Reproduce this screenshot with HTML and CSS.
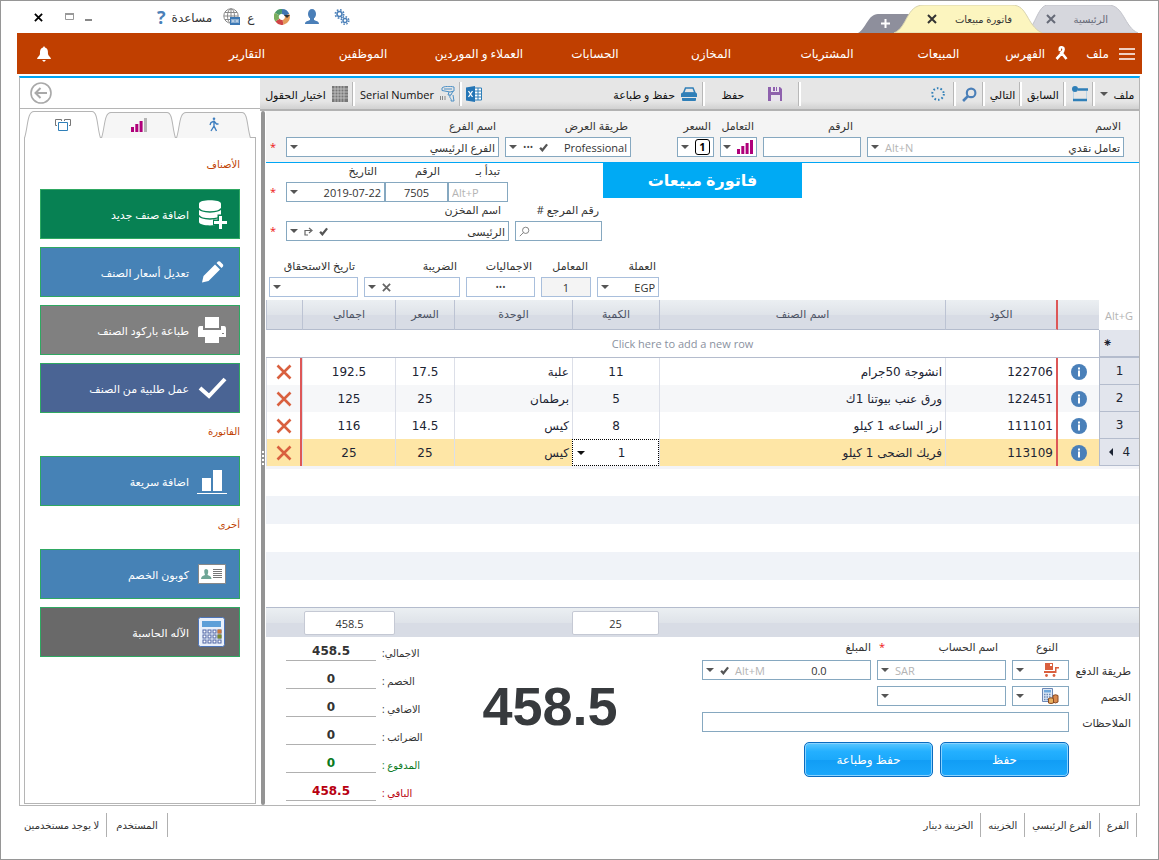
FILE: index.html
```
<!DOCTYPE html>
<html lang="ar" dir="rtl">
<head>
    <meta charset="UTF-8">
    <meta name="viewport" content="width=device-width, initial-scale=1.0">
    <title>فاتورة مبيعات</title>
    <link rel="stylesheet" href="styles.css">
</head>
<body>

    <!-- Shared icons -->
    <svg class="defs" aria-hidden="true">
        <symbol id="i-check" viewBox="0 0 8 8"><path d="M1 4.2 3 6.5 7.2 1.2" fill="none" stroke="#555" stroke-width="2"/></symbol>
        <symbol id="i-x" viewBox="0 0 16 16"><path d="M1.5 1.5 14.5 14.5M14.5 1.5 1.5 14.5" fill="none" stroke="#d9603f" stroke-width="2.6"/></symbol>
        <symbol id="i-close" viewBox="0 0 10 10"><path d="M1 1 9 9M9 1 1 9" fill="none" stroke="currentColor" stroke-width="2"/></symbol>
        <symbol id="i-info" viewBox="0 0 16 16"><circle cx="8" cy="8" r="8" fill="#4a80b9"/><path d="M7 3.500h2v2H7zM7 6.500h2v6H7z" fill="#fff"/></symbol>
        <symbol id="i-bars" viewBox="0 0 16 14"><path d="M0 9h3v5H0zM4.300 6h3v8h-3zM8.600 3h3v11h-3z" fill="#b0007a"/><path d="M13 0h3v14h-3z" fill="var(--last-bar, #b0007a)"/></symbol>
        <symbol id="i-search" viewBox="0 0 14 14"><circle cx="8.500" cy="5.500" r="4" fill="none" stroke="currentColor" stroke-width="var(--ring, 2)"/><path d="M5.500 8.500 1 13" fill="none" stroke="currentColor" stroke-width="var(--ring, 2.500)"/></symbol>
    </svg>

    <!-- Title bar -->
    <header class="titlebar">
        <div class="tabs">
            <div class="tab tab-home">
                <svg class="tab-shape" viewBox="0 0 112 28" preserveAspectRatio="none"><path d="M0 28C10 20 12 0 22 0H82C98 0 98 22 112 28Z" fill="#d6d7dd" stroke="#c2c3ca"/></svg>
                <a href="#">الرئيسية</a>
                <button aria-label="إغلاق"><svg width="10" height="10"><use href="#i-close"/></svg></button>
            </div>
            <div class="tab tab-active">
                <svg class="tab-shape" viewBox="0 0 148 28" preserveAspectRatio="none"><path d="M0 28C14 22 12 0 30 0H118C134 0 132 20 148 28Z" fill="#fcf5bf" stroke="#d8d3ae"/></svg>
                <a href="#">فاتورة مبيعات</a>
                <button aria-label="إغلاق"><svg width="10" height="10"><use href="#i-close"/></svg></button>
            </div>
            <div class="tab tab-new">
                <svg class="tab-shape" viewBox="0 0 60 19" preserveAspectRatio="none"><path d="M0 19C8 15 10 0 20 0H60V19Z" fill="#8e8f9c"/></svg>
                <button aria-label="تبويب جديد"><svg width="9" height="9" viewBox="0 0 9 9"><path d="M4.500 0V9M0 4.500H9" stroke="#fff" stroke-width="2"/></svg></button>
            </div>
        </div>
        <div class="tools">
            <button aria-label="الإعدادات"><svg width="16" height="16" viewBox="0 0 16 16" fill="none" stroke="#4a7fb8"><circle cx="5.500" cy="5" r="2.500" stroke-width="1.500"/><circle cx="5.500" cy="5" r="4.200" stroke-width="1.600" stroke-dasharray="1.700 1.600"/><circle cx="11" cy="11.500" r="2" stroke-width="1.500"/><circle cx="11" cy="11.500" r="3.800" stroke-width="1.500" stroke-dasharray="1.500 1.500"/></svg></button>
            <button aria-label="الحساب"><svg width="16" height="16" viewBox="0 0 16 16" fill="#4a7fb8"><ellipse cx="8" cy="5" rx="4" ry="5"/><path d="M1 15c0-3 3-3 5-4V8h4v3c2 1 5 1 5 4z"/></svg></button>
            <button aria-label="الألوان"><svg width="16" height="16" viewBox="0 0 16 16" fill="none" stroke-width="5"><path d="M3 5A5.500 5.500 0 0 1 8 2.500" stroke="#4c9a6a"/><path d="M8 2.500A5.500 5.500 0 0 1 13 6" stroke="#3f74b0"/><path d="M13 6A5.500 5.500 0 0 1 9 13.400" stroke="#e39a5a"/><path d="M9 13.400A5.500 5.500 0 0 1 3.500 11" stroke="#cf4545"/><path d="M3.500 11A5.500 5.500 0 0 1 3 5" stroke="#7cae5e"/><path d="M10 6h6l-3 3z" fill="#333" stroke="none"/></svg></button>
            <button class="lang"><span>ع</span><svg width="18" height="18" viewBox="0 0 18 18" fill="none" stroke="#8a8a8a"><circle cx="8" cy="8" r="7.200"/><path d="M1 8H15M8 1V15M2 4.500H14M2 11.500H8"/><ellipse cx="8" cy="8" rx="3.500" ry="7.200"/><path d="M7 9H17V17H7z" fill="#3c78b4" stroke="none"/><path d="M9 11v4M11 11v4M9 13h2M13 11v4M15 11v4M13 13h2" stroke="#fff" stroke-width=".8"/></svg></button>
            <button class="help"><span>مساعدة</span><b>?</b></button>
            <div class="window-buttons">
                <button aria-label="تصغير"><svg width="8" height="10" viewBox="0 0 8 10"><path d="M0 8H7" stroke="#888" stroke-width="2"/></svg></button>
                <button aria-label="تكبير"><svg width="10" height="8" viewBox="0 0 10 8"><path d="M.5 1H8.500V6.500H.5z" fill="none" stroke="#999"/><path d="M0 1H9" stroke="#999" stroke-width="2"/></svg></button>
                <button class="window-close" aria-label="إغلاق"><svg width="9" height="9"><use href="#i-close"/></svg></button>
            </div>
        </div>
    </header>

    <!-- Main menu -->
    <nav class="menu">
        <div class="menu-first">
            <button class="burger" aria-label="القائمة"><svg width="16" height="12" viewBox="0 0 16 12"><path d="M0 1H16M0 6H16M0 11H16" stroke="#fff" stroke-width="1.300"/></svg></button>
            <a href="#">ملف</a>
            <svg class="ribbon" width="13" height="15" viewBox="0 0 13 15"><path d="M5 5C4 1 6 1 7.500 1.500S9 4 7 7L1.500 13M5.500 5.500 11.500 13" fill="none" stroke="#fff" stroke-width="2.600"/></svg>
            <a href="#">الفهرس</a>
        </div>
        <a class="menu-item menu-sales" href="#">المبيعات</a>
        <a class="menu-item" href="#">المشتريات</a>
        <a class="menu-item" href="#">المخازن</a>
        <a class="menu-item" href="#">الحسابات</a>
        <a class="menu-item" href="#">العملاء و الموردين</a>
        <a class="menu-item" href="#">الموظفين</a>
        <a class="menu-item" href="#">التقارير</a>
        <button class="bell" aria-label="التنبيهات"><svg width="14" height="16" viewBox="0 0 14 16" fill="#fff"><path d="M7 0 8 1.500C11 2.500 11 5 11 8c0 2 3 3 3 5H0c0-2 3-3 3-5 0-3 0-5.500 3-6.500zM5 14h4l-2 2z"/></svg></button>
    </nav>

    <main class="frame">
        <section class="content">

            <!-- Toolbar -->
            <div class="toolbar">
                <button class="tool tool-file">ملف <i class="caret"></i></button>
                <button class="tool tool-icon" aria-label="عرض"><svg width="16" height="16" viewBox="0 0 16 16"><path d="M1.500 5V14.500H14.500V5" fill="none" stroke="#b9d3e6"/><path d="M6 3.500H16M1 14H15" stroke="#2f7fb8" stroke-width="2.500"/><circle cx="3" cy="3" r="3" fill="#2f7fb8"/></svg></button>
                <button class="tool tool-prev">السابق</button>
                <button class="tool tool-next">التالي</button>
                <button class="tool tool-icon find" aria-label="بحث"><svg width="15" height="15"><use href="#i-search"/></svg></button>
                <div class="tool tool-loader"><svg width="14" height="14" viewBox="0 0 14 14"><circle cx="7" cy="7" r="5.800" fill="none" stroke="#2f7fb8" stroke-width="2" stroke-dasharray="1.600 2.040"/></svg></div>
                <button class="tool tool-save"><svg width="14" height="14" viewBox="0 0 14 14"><path d="M0 0H12L14 2V14H0z" fill="#8e61ad"/><path d="M3 0H11V5H3zM3 8H12V14H3z" fill="#e9e4ee"/><path d="M5 0h2v4H5zM8 0h1v4H8z" fill="#8e61ad"/></svg>حفظ</button>
                <div class="tool tool-print">
                    <button><svg width="16" height="15" viewBox="0 0 16 15"><path d="M4.500 1H12L14 6H2.500z" fill="#e4e4e4" stroke="#2f7fb8" stroke-width="1.500"/><path d="M0 7Q0 5.500 2 5.500H14Q16 5.500 16 7V10H0zM1 11H15V13Q15 14 14 14H2Q1 14 1 13z" fill="#2f7fb8"/></svg>حفظ و طباعة</button>
                    <button aria-label="Excel"><svg width="16" height="16" viewBox="0 0 16 16"><path d="M8 2H15.500V14H8z" fill="#fff" stroke="#2f7fb8"/><path d="M9 5h6M9 8h6M9 11h6M12 2V14" stroke="#2f7fb8"/><path d="M0 1.500 9 0V16L0 14.500z" fill="#2475b5"/><path d="M2.500 5 6.500 11M6.500 5 2.500 11" stroke="#fff" stroke-width="1.300"/></svg></button>
                </div>
                <button class="tool tool-serial"><svg width="15" height="16" viewBox="0 0 15 16" fill="none" stroke="#4a8ec4"><path d="M2 2C4 0 10 0 14 1V5L10 6 2 4.500z" /><path d="M4 3 12 3M9 6 8 9H11L13 5M10 9C9 13 12 12 11 15H14L13 9"/><path d="M.5 10V14M2.500 10V14M5 10V14" stroke="#888"/></svg>Serial Number</button>
                <button class="tool tool-fields"><svg width="16" height="16" viewBox="0 0 16 16"><path d="M0 0H16V16H0z" fill="#777"/><path d="M0 3H16M0 6H16M0 9H16M0 12H16M3 0V16M6 0V16M9 0V16M12 0V16" stroke="#c9c9c9" stroke-width=".8"/></svg>اختيار الحقول</button>
            </div>

            <div class="workspace">
                <form class="invoice">

                    <!-- Customer row -->
                    <div class="row row-customer">
                        <div class="field f-name">
                            <label for="name">الاسم</label>
                            <div class="box"><input id="name" value="تعامل نقدي"><span class="hint">Alt+N</span><i class="caret"></i></div>
                        </div>
                        <div class="field f-number">
                            <label class="indent" for="number">الرقم</label>
                            <div class="box"><input id="number"></div>
                        </div>
                        <div class="field f-small">
                            <label for="deal">التعامل</label>
                            <button type="button" class="box" id="deal"><svg width="16" height="14"><use href="#i-bars"/></svg><i class="caret"></i></button>
                        </div>
                        <div class="field f-small">
                            <label for="price">السعر</label>
                            <button type="button" class="box" id="price"><span class="level">1</span><i class="caret"></i></button>
                        </div>
                        <div class="field f-view">
                            <label for="view">طريقة العرض</label>
                            <div class="box"><select id="view"><option>Professional</option></select><svg width="9" height="9"><use href="#i-check"/></svg><span class="dots">•••</span><i class="caret"></i></div>
                        </div>
                        <div class="field f-branch">
                            <label for="branch">اسم الفرع</label>
                            <div class="box"><select id="branch"><option>الفرع الرئيسي</option></select><i class="caret"></i></div>
                        </div>
                        <span class="required">*</span>
                    </div>

                    <!-- Title and document numbers -->
                    <div class="document">
                        <h1>فاتورة مبيعات</h1>
                        <div class="document-fields">
                            <div class="row row-tight">
                                <div class="field f-start">
                                    <label class="indent" for="start">تبدأ بـ</label>
                                    <div class="box"><input id="start" dir="ltr" placeholder="Alt+P"></div>
                                </div>
                                <div class="field f-doc">
                                    <label class="indent" for="doc">الرقم</label>
                                    <div class="box"><input class="center" id="doc" value="7505"></div>
                                </div>
                                <div class="field f-date">
                                    <label class="indent" for="date">التاريخ</label>
                                    <div class="box"><input id="date" value="2019-07-22"><i class="caret"></i></div>
                                </div>
                                <span class="required">*</span>
                            </div>
                            <div class="row">
                                <div class="field f-ref">
                                    <label for="ref">رقم المرجع #</label>
                                    <div class="box ref"><input id="ref"><svg width="11" height="11"><use href="#i-search"/></svg></div>
                                </div>
                                <div class="field f-store">
                                    <label class="indent" for="store">اسم المخزن</label>
                                    <div class="box"><select id="store"><option>الرئيسى</option></select><svg width="9" height="9"><use href="#i-check"/></svg><svg width="9" height="9" viewBox="0 0 9 9"><path d="M1 8.500V3.500H7M5 1 8 3.500 5 6M1 8H4" fill="none" stroke="#666" stroke-width="1.200"/></svg><i class="caret"></i></div>
                                </div>
                                <span class="required">*</span>
                            </div>
                        </div>
                    </div>

                    <div class="row row-extra">
                        <div class="field f-currency">
                            <label for="currency">العملة</label>
                            <div class="box"><select id="currency"><option>EGP</option></select><i class="caret"></i></div>
                        </div>
                        <div class="field f-rate">
                            <label for="rate">المعامل</label>
                            <div class="box disabled"><input class="center" id="rate" value="1"></div>
                        </div>
                        <div class="field f-totals">
                            <label for="totals">الاجماليات</label>
                            <button type="button" class="box" id="totals"><span class="dots">•••</span></button>
                        </div>
                        <div class="field f-tax">
                            <label for="tax">الضريبة</label>
                            <div class="box"><select id="tax"><option></option></select><svg class="clear" width="9" height="9"><use href="#i-close"/></svg><i class="caret"></i></div>
                        </div>
                        <div class="field f-due">
                            <label for="due">تاريخ الاستحقاق</label>
                            <div class="box"><input id="due"><i class="caret"></i></div>
                        </div>
                    </div>

                    <!-- Items -->
                    <table class="items">
                        <colgroup>
                            <col class="c-index"><col class="c-info"><col class="c-code"><col><col class="c-qty"><col class="c-unit"><col class="c-price"><col class="c-total"><col class="c-delete">
                        </colgroup>
                        <thead>
                            <tr><th class="corner">Alt+G</th><th></th><th class="red">الكود</th><th>اسم الصنف</th><th>الكمية</th><th>الوحدة</th><th>السعر</th><th>اجمالي</th><th></th></tr>
                        </thead>
                        <tbody>
                            <tr class="add"><th>⁕</th><td colspan="8">Click here to add a new row</td></tr>
                            <tr>
                                <th>1</th><td class="center"><button type="button" aria-label="معلومات"><svg width="16" height="16"><use href="#i-info"/></svg></button></td>
                                <td class="red">122706</td><td>انشوجة 50جرام</td><td class="center">11</td><td>علبة</td><td class="center">17.5</td><td class="center">192.5</td>
                                <td class="red center"><button type="button" aria-label="حذف"><svg width="16" height="16"><use href="#i-x"/></svg></button></td>
                            </tr>
                            <tr class="striped">
                                <th>2</th><td class="center"><button type="button" aria-label="معلومات"><svg width="16" height="16"><use href="#i-info"/></svg></button></td>
                                <td class="red">122451</td><td>ورق عنب بيوتنا 1ك</td><td class="center">5</td><td>برطمان</td><td class="center">25</td><td class="center">125</td>
                                <td class="red center"><button type="button" aria-label="حذف"><svg width="16" height="16"><use href="#i-x"/></svg></button></td>
                            </tr>
                            <tr>
                                <th>3</th><td class="center"><button type="button" aria-label="معلومات"><svg width="16" height="16"><use href="#i-info"/></svg></button></td>
                                <td class="red">111101</td><td>ارز الساعه 1 كيلو</td><td class="center">8</td><td>كيس</td><td class="center">14.5</td><td class="center">116</td>
                                <td class="red center"><button type="button" aria-label="حذف"><svg width="16" height="16"><use href="#i-x"/></svg></button></td>
                            </tr>
                            <tr class="selected">
                                <th>4 <i class="pointer"></i></th><td class="center"><button type="button" aria-label="معلومات"><svg width="16" height="16"><use href="#i-info"/></svg></button></td>
                                <td class="red">113109</td><td>فريك الضحى 1 كيلو</td>
                                <td class="editing"><div class="cell-edit"><input class="center" aria-label="الكمية" value="1"><i class="caret"></i></div></td>
                                <td>كيس</td><td class="center">25</td><td class="center">25</td>
                                <td class="red center"><button type="button" aria-label="حذف"><svg width="16" height="16"><use href="#i-x"/></svg></button></td>
                            </tr>
                        </tbody>
                    </table>
                    <div class="empty-rows"></div>
                    <div class="summary">
                        <output class="sum-qty">25</output>
                        <output class="sum-total">458.5</output>
                    </div>

                    <!-- Payment -->
                    <div class="bottom">
                        <div class="payment">
                            <label class="pay-type" for="pay-type">النوع</label>
                            <label class="pay-account" for="account">اسم الحساب</label>
                            <label class="pay-amount" for="amount"><span class="star">*</span>المبلغ</label>

                            <label class="line" for="pay-type">طريقة الدفع</label>
                            <button type="button" class="box" id="pay-type"><svg class="push" width="16" height="15" viewBox="0 0 16 15" fill="#d9603f"><path d="M2 0H10V7H2zM1 8H12V4H16V5.500H13.500V10H1z"/><circle cx="3.500" cy="12.500" r="1.400"/><circle cx="11" cy="12.500" r="1.400"/><path d="M7 1h2v2H7z" fill="#fff"/></svg><i class="caret"></i></button>
                            <div class="box"><input id="account"><span class="hint">SAR</span><i class="caret"></i></div>
                            <div class="box"><input class="center" id="amount" value="0.0"><span class="hint">Alt+M</span><svg width="9" height="9"><use href="#i-check"/></svg><i class="caret"></i></div>

                            <label class="line" for="discount-type">الخصم</label>
                            <button type="button" class="box" id="discount-type"><svg class="push" width="17" height="16" viewBox="0 0 17 16"><path d="M.5.5H10.500V13.500H.5z" fill="#dce8f6" stroke="#6b87b5"/><path d="M2 2h7v2.500H2z" fill="#6fa8dc"/><path d="M2 6.500h7M2 9h7M2 11.500h5" stroke="#6b87b5" stroke-width="1.500" stroke-dasharray="1.500 1"/><path d="M11 7.500q2.500-1.500 5 0V14q-2.500 2-5 0z" fill="#d98a4e" stroke="#8a4a22"/><path d="M6.500 10.500q2.500-1.500 5 0V15q-2.500 1-5 0z" fill="#e8b060" stroke="#8a4a22"/></svg><i class="caret"></i></button>
                            <div class="box discount"><select aria-label="الخصم"><option></option></select><i class="caret"></i></div>

                            <label class="line" for="notes">الملاحظات</label>
                            <div class="box notes"><input id="notes"></div>

                            <div class="actions">
                                <button type="button" class="primary">حفظ</button>
                                <button type="button" class="primary">حفظ وطباعة</button>
                            </div>
                        </div>
                        <div class="grand-total">458.5</div>
                        <dl class="totals">
                            <dt>الاجمالي:</dt><dd>458.5</dd>
                            <dt>الخصم :</dt><dd>0</dd>
                            <dt>الاضافي :</dt><dd>0</dd>
                            <dt>الضرائب :</dt><dd>0</dd>
                            <dt class="paid">المدفوع :</dt><dd class="paid">0</dd>
                            <dt class="rest">الباقي :</dt><dd class="rest">458.5</dd>
                        </dl>
                    </div>
                </form>
                <div class="splitter"><span></span></div>
            </div>
        </section>

        <!-- Side panel -->
        <aside class="sidebar">
            <div class="back-bar">
                <button aria-label="رجوع"><svg width="22" height="22" viewBox="0 0 22 22" fill="none" stroke="#a9a9a9" stroke-width="1.600"><circle cx="11" cy="11" r="10"/><path d="M17 11H6M10.500 6 5.500 11l5 5" stroke-width="2"/></svg></button>
            </div>
            <div class="side-tabs">
                <button aria-label="الحركة"><svg class="side-shape" viewBox="0 0 75 26" preserveAspectRatio="none"><path d="M.5 26C4 16 3 1.500 10 1.500H66C72 1.500 71 16 74.500 26" fill="#f6f6f6" stroke="#b5b5b5"/></svg><svg width="10" height="15" viewBox="0 0 10 15" fill="none" stroke="#3f7fc0" stroke-width="1.400"><circle cx="5" cy="1.800" r="1.300" fill="#3f7fc0" stroke="none"/><path d="M5 4V9L7.500 14M5 9 2 14M1 8 2 5.500 5 4.200 7.500 7H9.500" /></svg></button>
                <button class="levels" aria-label="المستويات"><svg class="side-shape" viewBox="0 0 75 26" preserveAspectRatio="none"><path d="M.5 26C4 16 3 1.500 10 1.500H66C72 1.500 71 16 74.500 26" fill="#f6f6f6" stroke="#b5b5b5"/></svg><svg width="16" height="14"><use href="#i-bars"/></svg></button>
                <button class="current" aria-label="الأصناف"><svg class="side-shape" viewBox="0 0 77 26" preserveAspectRatio="none"><path d="M.5 26C4 16 3 .5 10 .5H68C74 .5 73 16 76.500 26" fill="#fff" stroke="#b5b5b5"/></svg><svg width="16" height="12" viewBox="0 0 16 12" fill="none"><path d="M2 6.500H.5V.5H6.500V2M9.500 2V.5H15.500V6.500H14" stroke="#777"/><path d="M3.500 3.500H12.500V11.500H3.500z" stroke="#2f7fb8"/></svg></button>
            </div>
            <div class="side-panel">
                <h2>الأصناف</h2>
                <div class="side-group">
                    <button class="side-button green"><svg width="30" height="30" viewBox="0 0 30 30"><path d="M2 4.500C2 0 24 0 24 4.500V23C24 27.500 2 27.500 2 23z" fill="#fff"/><path d="M2 9.500C4 14 22 14 24 9.500M2 16.500C4 21 22 21 24 16.500" fill="none" stroke="#078153" stroke-width="1.500"/><path d="M23.500 15.500V30M16 23.500H30" stroke="#078153" stroke-width="6"/><path d="M23.500 17V30M17 23.500H30" stroke="#fff" stroke-width="3"/></svg><span>اضافة صنف جديد</span></button>
                    <button class="side-button"><svg width="30" height="30" viewBox="0 0 30 30" fill="#fff"><path d="M5 25.500 6.500 19 18 7.500 23 12.500 11.500 24zM19.500 6 21 4.500Q22 3.800 23 4.500L26 7.500Q26.500 8.500 26 9.500L24.500 11z"/></svg><span>تعديل أسعار الصنف</span></button>
                    <button class="side-button gray"><svg width="30" height="30" viewBox="0 0 30 30" fill="#fff"><path d="M8 2H22V13H8z"/><path d="M1 14Q1 11 3 11H6V15H24V11H27Q29 11 29 14V22H1z"/><path d="M8 19H22V28H8z"/><path d="M25 18h2v1h-2z" fill="#808080"/></svg><span>طباعة باركود الصنف</span></button>
                    <button class="side-button navy"><svg width="30" height="30" viewBox="0 0 30 30"><path d="M3 15 12 23 28 6" fill="none" stroke="#fff" stroke-width="4"/></svg><span>عمل طلبية من الصنف</span></button>
                </div>
                <h2>الفاتورة</h2>
                <div class="side-group">
                    <button class="side-button"><svg width="30" height="30" viewBox="0 0 30 30" fill="#fff"><path d="M5 12H14V25H5zM16 4H25V25H16zM0 27H30V28H0z"/></svg><span>اضافة سريعة</span></button>
                </div>
                <h2>أخرى</h2>
                <div class="side-group">
                    <button class="side-button"><svg width="30" height="30" viewBox="0 0 30 30"><path d="M1.500 5.500H28.500V24.500H1.500z" fill="#fff" stroke="#888"/><path d="M4 20q0-3 4-4-2-6 1-6 3.500 0 1.500 6 4 1 4 4z" fill="#6fa696"/><path d="M16 10.500h9M16 12.500h9M16 14.500h9M16 16.500h9M16 18.500h9" stroke="#777"/></svg><span>كوبون الخصم</span></button>
                    <button class="side-button dark"><svg width="30" height="30" viewBox="0 0 30 30"><rect x="1.500" y=".5" width="26" height="29" rx="2" fill="#e9f0fb" stroke="#4d74b8"/><path d="M5 4H24V10H5z" fill="#5d9fd8"/><path d="M5.500 14.500H24.500M5.500 19.500H24.500M5.500 24.500H24.500" stroke="#4d63a3" stroke-width="4" stroke-dasharray="4 1"/><path d="M6.500 14.500H24M6.500 19.500H24M6.500 24.500H24" stroke="#fff" stroke-width="2" stroke-dasharray="2 3"/><path d="M20.500 12.500h4v4h-4z" fill="#c9783c"/><path d="M20.500 17.500h4v4h-4z" fill="#7a8a2a"/></svg><span>الآله الحاسبة</span></button>
                </div>
            </div>
        </aside>
    </main>

    <!-- Status bar -->
    <footer class="status">
        <span>الفرع</span>
        <span>الفرع الرئيسي</span>
        <span>الخزينه</span>
        <span>الخزينة دينار</span>
        <span class="user">المستخدم</span>
        <span>لا يوجد مستخدمين</span>
    </footer>

</body>
</html>
```
FILE: styles.css
```
* {
    box-sizing: border-box;
}

body {
    margin: 0;
    min-height: 100vh;
    display: flex;
    flex-direction: column;
    border: 1px solid #969696;
    background: #fff;
    color: #333;
    font-family: "Open Sans", "DejaVu Sans", sans-serif;
    font-size: 11px;
}

button, input, select {
    margin: 0;
    padding: 0;
    border: none;
    border-radius: 0;
    background: none;
    color: inherit;
    font: inherit;
    outline: none;
}

button {
    cursor: pointer;
}

select {
    appearance: none;
}

a {
    color: inherit;
    text-decoration: none;
}

svg {
    display: block;
    flex: none;
}

.defs {
    position: absolute;
    width: 0;
    height: 0;
}

.caret {
    flex: none;
    border: 4px solid transparent;
    border-top-color: #555;
    border-bottom-width: 0;
}

.center {
    text-align: center;
}

/* Title bar */
.titlebar {
    display: flex;
    justify-content: space-between;
    height: 32px;
    padding-right: 20px;
}

.tabs {
    display: flex;
    align-items: flex-end;
    font-size: 10px;
}

.tab {
    position: relative;
    display: flex;
    align-items: center;
    height: 28px;
    color: #666a77;
}

.tab-shape {
    position: absolute;
    inset: 0;
    width: 100%;
    height: 100%;
}

.tab a, .tab button {
    position: relative;
}

.tab-home {
    width: 112px;
    padding-right: 30px;
    gap: 18px;
}

.tab-active {
    z-index: 1;
    width: 148px;
    margin-right: -16px;
    padding-right: 30px;
    gap: 18px;
    color: #333;
}

.tab-new {
    width: 60px;
    height: 19px;
    margin-right: -24px;
    padding-right: 28px;
}

.tools {
    display: flex;
    align-items: center;
    gap: 14px;
    padding-left: 33px;
    font-size: 12px;
}

.lang, .help {
    display: flex;
    align-items: center;
    gap: 6px;
}

.lang {
    margin-right: 6px;
}

.help {
    margin-right: -3px;
}

.help b {
    color: #4a7fb8;
    font-size: 18px;
    line-height: 20px;
}

.window-buttons {
    display: flex;
    align-items: center;
    gap: 10px;
    margin-right: 50px;
    color: #000;
}

.window-close {
    margin-right: 12px;
}

/* Main menu */
.menu {
    display: flex;
    align-items: center;
    height: 41px;
    margin: 0 16px;
    background: #c03f00;
    color: #fff;
    font-size: 12px;
}

.menu-first {
    display: flex;
    align-items: center;
    gap: 10px;
    width: 150px;
    padding-right: 7px;
}

.ribbon {
    margin-right: 8px;
}

.menu-item {
    flex: 0 1 116px;
    text-align: center;
    white-space: nowrap;
}

.menu-sales {
    flex-basis: 107px;
}

.bell {
    margin: 0 auto 0 20px;
}

/* Frame */
.frame {
    flex: 1;
    display: grid;
    grid-template-columns: 1fr 240px;
    margin: 2px 18px 0;
    border: 1px solid #b5b5b5;
    border-top: 2px solid #00a6f5;
}

.content {
    display: flex;
    flex-direction: column;
}

/* Toolbar */
.toolbar {
    display: flex;
    height: 33px;
    padding-bottom: 2px;
    background: linear-gradient(#e6e6e6 70%, #d2d2d2 93%, #b2b2b2 94%);
    color: #111;
    font-size: 11px;
}

.tool {
    display: flex;
    align-items: center;
    justify-content: center;
    gap: 6px;
    margin: 4px 0 3px;
    border-left: 2px solid #fff;
    box-shadow: -1px 0 #b8b8b8;
    white-space: nowrap;
}

.tool-file {
    width: 46px;
}

.tool-icon {
    width: 29px;
}

.find {
    color: #4a7fb8;
}

.tool-prev {
    width: 44px;
}

.tool-next {
    width: 37px;
}

.tool-loader {
    flex: 1;
    justify-content: flex-start;
    padding-right: 9px;
}

.tool-save {
    width: 96px;
    gap: 24px;
}

.tool-print {
    width: 243px;
    justify-content: space-between;
    padding: 0 6px 0 4px;
}

.tool-print button {
    display: flex;
    align-items: center;
    gap: 6px;
}

.tool-serial {
    width: 107px;
}

.tool-fields {
    width: 93px;
    border-left: none;
    box-shadow: none;
}

.workspace {
    flex: 1;
    display: flex;
}

.splitter {
    display: flex;
    align-items: center;
    justify-content: center;
    width: 4px;
    margin-right: 1px;
    margin-left: 1px;
    border-radius: 3px;
    background: #949494;
}

.splitter span {
    height: 14px;
    border-left: 2px dotted #fff;
}

.invoice {
    flex: 1;
    display: flex;
    flex-direction: column;
    min-width: 0;
}

/* Fields */
.row {
    display: flex;
    align-items: flex-end;
    justify-content: flex-end;
    gap: 6px;
}

.row-customer {
    height: 52px;
    padding: 0 15px 5px 0;
    border-bottom: 1px solid #00a6f5;
    background: #f4f4f4;
}

.row-tight {
    gap: 0;
}

.row-extra {
    margin-top: 17px;
    padding: 0 0 3px 3px;
}

.field label {
    display: block;
    height: 16px;
    margin-bottom: 3px;
    padding-right: 3px;
    line-height: 16px;
    white-space: nowrap;
}

.field .indent {
    padding-right: 8px;
}

.box {
    display: flex;
    align-items: center;
    gap: 6px;
    width: 100%;
    height: 20px;
    padding: 0 3px;
    border: 1px solid #86a8c0;
    background: #fff;
}

button.box {
    justify-content: space-between;
}

.row-extra .box {
    border-color: #a9bfdc;
}

.box input, .box select {
    flex: 1;
    min-width: 0;
    height: 18px;
}

.box.disabled {
    background: #f4f4f4;
}

.hint, .box input::placeholder {
    color: #b4b4b4;
}

.hint {
    direction: ltr;
}

.dots {
    color: #444;
    font-size: 9px;
    line-height: 18px;
}

.level {
    width: 16px;
    height: 16px;
    border: 1px solid #000;
    border-radius: 3px;
    color: #000;
    font-weight: bold;
    line-height: 14px;
}

.f-name { flex: 1; }
.f-number { width: 98px; }
.f-small { width: 37px; }
.f-view { width: 126px; margin-right: 40px; }
.f-branch { width: 213px; }
.f-start { width: 60px; }
.f-doc { width: 63px; }
.f-date { width: 99px; }
.f-ref { width: 87px; }
.f-store { width: 223px; }
.f-currency { width: 62px; }
.f-rate { width: 50px; }
.f-totals { width: 69px; }
.f-tax { width: 96px; }
.f-due { width: 89px; }

#totals {
    justify-content: center;
}

.ref, .clear {
    color: #666;
    --ring: 1;
}

.required {
    width: 14px;
    height: 20px;
    color: #e11;
    line-height: 20px;
    text-align: center;
}

.row-tight .required {
    width: 20px;
    padding-right: 6px;
}

.document {
    display: flex;
    justify-content: flex-end;
    gap: 1px;
}

h1 {
    width: 199px;
    height: 35px;
    margin: 0;
    background: #00aaf4;
    color: #fff;
    font-size: 16px;
    line-height: 35px;
    text-align: center;
}

/* Items table */
.items {
    width: 100%;
    border-collapse: separate;
    border-spacing: 0;
    table-layout: fixed;
    color: #1c2433;
    font-family: "DejaVu Sans", sans-serif;
    font-size: 12px;
}

.c-index { width: 40px; }
.c-info { width: 41px; }
.c-code { width: 113px; }
.c-qty { width: 87px; }
.c-unit { width: 118px; }
.c-price { width: 59px; }
.c-total { width: 93px; }
.c-delete { width: 36px; }

.items thead th {
    height: 30px;
    padding: 0;
    border-left: 1px solid #bcc3d3;
    border-bottom: 1px solid #b4bccd;
    background: linear-gradient(#ebeff2, #dfe3e9 50%, #d8dce5 51%);
    color: #4b5263;
    font-size: 11px;
    font-weight: normal;
}

.items thead .corner {
    border: none;
    background: #fff;
    color: #b4b4b4;
    font-family: "Open Sans", sans-serif;
}

.items tbody th {
    height: 27px;
    padding: 0;
    border-bottom: 1px solid #b4bccd;
    border-left: 1px solid #b4bccd;
    background: #e2e5ed;
    font-weight: normal;
}

.items td {
    height: 27px;
    padding: 0 3px;
    border-left: 1px solid #dcdfe8;
    background: #fff;
    white-space: nowrap;
}

.items td button {
    display: block;
    margin: 0 auto;
}

.items .striped td {
    background: #f6f7f9;
}

.items .selected td {
    background: #fee6a6;
}

.items .add th {
    height: 28px;
    padding-right: 24px;
    border-bottom-width: 2px;
}

.items .add td {
    height: 28px;
    border-bottom: 1px solid #b4bccd;
    color: #8a91a0;
    font-family: "Open Sans", sans-serif;
    font-size: 11px;
    text-align: center;
}

.items td:nth-child(2), .items thead th:nth-child(2) {
    border-left: none;
}

.items .red {
    border-right: 2px solid #dd5757;
}

.pointer {
    display: inline-block;
    margin-right: 6px;
    border: 4px solid transparent;
    border-right-color: #1c2433;
    border-left-width: 0;
}

.items .selected .editing {
    padding: 0;
    border: 1px dotted #000;
    background: #fff;
}

.cell-edit {
    display: flex;
    align-items: center;
    padding-left: 4px;
}

.cell-edit input {
    flex: 1;
    min-width: 0;
}

.cell-edit .caret {
    border-top-color: #111;
}

.empty-rows {
    flex: 1;
    border-top: 3px solid #f3f4f8;
    background: repeating-linear-gradient(#fff 0 27px, #f0f3f8 27px 55px, #fff 55px 56px);
}

.summary {
    display: grid;
    grid-template-columns: 40px 41px 113px 1fr 87px 118px 59px 93px 36px;
    align-items: center;
    height: 30px;
    border-top: 1px solid #b4bccd;
    background: linear-gradient(#ebeff2, #dfe3e9 50%, #d8dce5 51%);
}

.summary output {
    height: 24px;
    border: 1px solid #c5c9d4;
    border-radius: 2px;
    background: #fff;
    line-height: 24px;
    text-align: center;
}

.sum-qty {
    grid-column: 5;
}

.sum-total {
    grid-column: 8;
    margin-left: 2px;
}

/* Payment */
.bottom {
    display: flex;
    align-items: flex-start;
    justify-content: space-between;
    height: 168px;
    padding: 0 8px 0 20px;
}

.payment {
    display: grid;
    grid-template-columns: 56px 57px 129px 169px;
    grid-template-rows: 17px 20px 20px 20px;
    align-items: center;
    gap: 6px;
    white-space: nowrap;
}

.pay-type {
    grid-column: 2;
    padding-right: 11px;
}

.pay-account {
    padding-right: 8px;
}

.pay-amount {
    position: relative;
}

.pay-type, .pay-account, .pay-amount {
    align-self: end;
}

.star {
    position: absolute;
    right: -14px;
    color: #e11;
}

.line {
    grid-column: 1;
}

.push {
    margin-right: 6px;
}

.discount {
    grid-column: 3;
}

.notes {
    grid-column: 2 / 5;
}

.actions {
    display: flex;
    gap: 7px;
    grid-column: 2 / 5;
    margin-top: 4px;
}

.primary {
    width: 129px;
    height: 35px;
    border: 1px solid #0a6cc0;
    border-radius: 5px;
    background: linear-gradient(#5cc8ff, #24b0ff 25%, #1ba9fb 50%, #119df5 51%, #1ba8fb);
    box-shadow: inset 0 0 0 1px #8ad3ff;
    color: #fff;
    font-size: 12px;
}

.grand-total {
    margin-top: 39px;
    padding-right: 30px;
    color: #373a3d;
    font-family: "Liberation Sans", sans-serif;
    font-size: 54px;
    font-weight: bold;
    line-height: 60px;
}

.totals {
    display: grid;
    grid-template-columns: 52px 90px;
    grid-auto-rows: 28px;
    margin: 0;
    font-size: 10px;
}

.totals dt {
    padding-left: 6px;
    line-height: 32px;
    text-align: left;
    white-space: nowrap;
    direction: rtl;
}

.totals dd {
    height: 24px;
    margin: 0;
    border-bottom: 1px solid #b0b0b0;
    font-family: "DejaVu Sans", sans-serif;
    font-size: 12px;
    font-weight: bold;
    line-height: 28px;
    text-align: center;
}

.totals .paid {
    color: #0a7a1e;
}

.totals .rest {
    color: #b80010;
}

/* Side panel */
.sidebar {
    display: flex;
    flex-direction: column;
    padding: 0 4px 1px;
}

.back-bar {
    display: flex;
    justify-content: flex-end;
    align-items: center;
    height: 31px;
    margin: 0 -4px;
    padding-left: 10px;
    border-bottom: 1px solid #b5b5b5;
}

.side-tabs {
    display: flex;
    justify-content: flex-end;
    height: 27px;
    margin-top: 2px;
    margin-bottom: -1px;
}

.side-tabs button {
    position: relative;
    display: flex;
    align-items: center;
    justify-content: center;
    width: 75px;
}

.side-tabs .current {
    z-index: 1;
    width: 77px;
}

.side-tabs svg {
    position: relative;
}

.side-tabs .side-shape {
    position: absolute;
    inset: 0;
    width: 100%;
    height: 100%;
}

.levels {
    --last-bar: #b5b5b5;
}

.side-panel {
    flex: 1;
    padding: 8px 15px;
    border: 1px solid #b5b5b5;
}

h2 {
    margin: 8px 0 15px;
    color: #c03f00;
    font-size: 10px;
    font-weight: normal;
    line-height: 20px;
}

.side-group {
    display: flex;
    flex-direction: column;
    gap: 8px;
}

.side-button {
    display: flex;
    align-items: center;
    gap: 8px;
    height: 50px;
    padding: 0 12px;
    border: 1px solid #2fa862;
    background: #4682b6;
    color: #fff;
    font-size: 11px;
}

.green {
    background: #078153;
}

.gray {
    background: #808080;
}

.navy {
    background: #4a6494;
}

.dark {
    background: #696969;
}

/* Status bar */
.status {
    display: flex;
    align-items: center;
    height: 53px;
    padding: 0 21px 16px 23px;
    font-size: 10px;
}

.status span {
    height: 24px;
    padding: 0 7px;
    border-right: 1px solid #b0b0b0;
    line-height: 24px;
    white-space: nowrap;
}

.status .user {
    margin-right: auto;
    padding: 0 9px;
}

.status span:last-child {
    padding-left: 0;
}
```
